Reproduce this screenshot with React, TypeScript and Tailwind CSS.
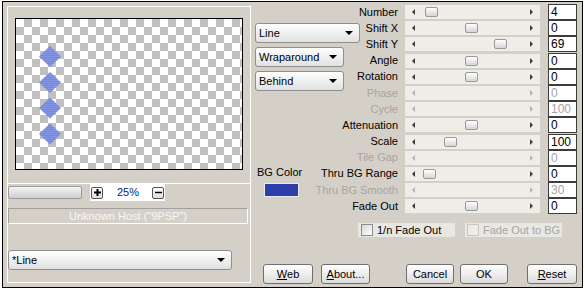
import React from "react";

type Row = { label: string; value: string; thumb?: number; disabled?: boolean };

const rows: Row[] = [
  { label: "Number", value: "4", thumb: 20 },
  { label: "Shift X", value: "0", thumb: 60 },
  { label: "Shift Y", value: "69", thumb: 89 },
  { label: "Angle", value: "0", thumb: 60 },
  { label: "Rotation", value: "0", thumb: 60 },
  { label: "Phase", value: "0", disabled: true },
  { label: "Cycle", value: "100", disabled: true },
  { label: "Attenuation", value: "0", thumb: 60 },
  { label: "Scale", value: "100", thumb: 39 },
  { label: "Tile Gap", value: "0", disabled: true },
  { label: "Thru BG Range", value: "0", thumb: 18 },
  { label: "Thru BG Smooth", value: "30", disabled: true },
  { label: "Fade Out", value: "0", thumb: 60 },
];

function Combo({ label, className }: { label: string; className: string }) {
  return (
    <div
      className={`flex items-center justify-between h-[20px] rounded-[3px] border border-[#8e8e8e] bg-linear-to-b from-white to-[#e1e1e1] pl-[3px] pr-[6px] ${className}`}
    >
      <span>{label}</span>
      <span className="border-x-[4px] border-x-transparent border-t-[4px] border-t-black" />
    </div>
  );
}

function Button({ children, className }: { children: React.ReactNode; className: string }) {
  return (
    <div
      className={`h-[20px] rounded-[3px] border border-[#707070] bg-linear-to-b from-white to-[#dcdcdc] flex items-center justify-center ${className}`}
    >
      {children}
    </div>
  );
}

function SliderRow({ row }: { row: Row }) {
  const arrow = row.disabled ? "#b4b4b4" : "#3c3c3c";
  return (
    <div className="flex items-center h-[16.2px]">
      <div
        className={`w-[78px] flex justify-end whitespace-nowrap ${row.disabled ? "text-[#a5a5a5]" : "text-black"}`}
      >
        {row.label}
      </div>
      <div className="ml-[7px] w-[135px] h-[14px] relative bg-[#eeede8] flex items-center">
        <svg width="4" height="6" className="ml-[7px]">
          <path d="M3 0 L0 3 L3 6 Z" fill={arrow} />
        </svg>
        <svg width="4" height="6" className="ml-auto mr-[6px]">
          <path d="M0 0 L3 3 L0 6 Z" fill={arrow} />
        </svg>
        {row.thumb !== undefined && (
          <div
            className="absolute top-[2px] w-[13px] h-[10px] rounded-[2px] border border-[#9a9a9a] bg-linear-to-b from-white to-[#d6d6d6]"
            style={{ left: row.thumb }}
          />
        )}
      </div>
      <div
        className={`ml-[8px] w-[29px] h-[16px] bg-white border border-[#3c3c3c] pl-[2px] text-[12px] flex items-center ${row.disabled ? "text-[#a5a5a5]" : "text-black"}`}
      >
        {row.value}
      </div>
    </div>
  );
}

function Preview() {
  const ys = [37.5, 63.5, 89, 115];
  return (
    <svg width="226" height="150" className="block">
      <defs>
        <pattern id="stripes" width="4" height="2" patternUnits="userSpaceOnUse">
          <rect width="4" height="1" fill="#7688de" />
          <rect y="1" width="4" height="1" fill="#8395e3" />
        </pattern>
      </defs>
      {ys.map((y) => (
        <path
          key={y}
          d={`M34 ${y - 10.5} L45 ${y} L34 ${y + 10.5} L23 ${y} Z`}
          fill="url(#stripes)"
        />
      ))}
    </svg>
  );
}

export default function App() {
  return (
    <div className="w-[585px] h-[289px] bg-white pt-[1px] pl-[2px] font-['Liberation_Sans',Arial,sans-serif] text-[11px] leading-none text-black">
      <div className="w-[581px] h-[287px] border border-black bg-[#d4d0c8] flex">
        {/* Left: preview panel */}
        <div className="ml-[4px] mt-[4px] w-[244px] h-[277px] border border-white flex flex-col shrink-0">
          <div className="ml-[7px] mt-[11px] w-[228px] h-[152px] border border-black bg-[image:conic-gradient(#c0c0c0_25%,#fff_0_50%,#c0c0c0_0_75%,#fff_0)] bg-[length:16px_16px]">
            <Preview />
          </div>

          <div className="mt-[13px] h-[18px] border-t border-white flex items-center">
            <div className="w-[74px] h-[13px] rounded-[2px] border border-[#9a9a9a] bg-linear-to-b from-[#f4f4f4] to-[#cfcfcf]" />
            <div className="ml-[8px] w-[75px] h-full bg-white flex items-center">
              <div className="ml-[1px] w-[12px] h-[12px] rounded-[2px] border border-[#555] bg-linear-to-b from-white to-[#dcdcdc] flex items-center justify-center">
                <svg width="7" height="7">
                  <path d="M3.5 0 V7 M0 3.5 H7" stroke="#000" strokeWidth="2" />
                </svg>
              </div>
              <span className="ml-[14px] text-[#0a1a78]">25%</span>
              <div className="ml-[13px] w-[12px] h-[12px] rounded-[2px] border border-[#555] bg-linear-to-b from-white to-[#dcdcdc] flex items-center justify-center">
                <svg width="7" height="7">
                  <path d="M0 3.5 H7" stroke="#000" strokeWidth="1.5" />
                </svg>
              </div>
            </div>
          </div>

          <div className="mt-[7px] w-[240px] h-[16px] border border-t-[#a0a0a0] border-l-[#a0a0a0] border-b-white border-r-white flex items-center justify-center text-[#f6f6f6]">
            Unknown Host ("9PSP")
          </div>

          <Combo label="*Line" className="mt-[26px] w-[224px]" />
        </div>

        {/* Right: settings */}
        <div className="ml-[4px] pt-[2px] flex-1 flex flex-col">
          <div className="flex">
            <div className="w-[65px] shrink-0 flex flex-col pt-[19px]">
              <Combo label="Line" className="w-[105px]" />
              <Combo label="Wraparound" className="mt-[4px] w-[89px]" />
              <Combo label="Behind" className="mt-[4px] w-[89px]" />
              <div className="mt-[74px] ml-[2px] h-[14px] flex items-center whitespace-nowrap">BG Color</div>
              <div className="mt-[4px] ml-[9px] w-[35px] h-[14px] bg-[#2b3ea9] border border-[#ececec]" />
            </div>
            <div className="flex flex-col">
              {rows.map((r) => (
                <SliderRow key={r.label} row={r} />
              ))}
            </div>
          </div>

          <div className="mt-[9px] ml-[103px] flex h-[14px]">
            <div className="w-[97px] h-full bg-[#e9e7e2] flex items-center">
              <div className="ml-[3px] w-[12px] h-[12px] border border-[#8c8c8c] bg-linear-to-br from-[#d8d8d4] to-white" />
              <span className="ml-[4px]">1/n Fade Out</span>
            </div>
            <div className="ml-[10px] w-[97px] h-full bg-[#e9e7e2] flex items-center">
              <div className="ml-[2px] w-[12px] h-[12px] border border-[#c6c6c2] bg-[#ecebe7]" />
              <span className="ml-[4px] text-[#a5a5a5]">Fade Out to BG</span>
            </div>
          </div>

          <div className="mt-[27px] flex">
            <Button className="ml-[8px] w-[50px]">
              <u>W</u>eb
            </Button>
            <Button className="ml-[8px] w-[49px]">
              <u>A</u>bout...
            </Button>
            <Button className="ml-[36px] w-[48px]">Cancel</Button>
            <Button className="ml-[6px] w-[48px]">OK</Button>
            <Button className="ml-[19px] w-[50px]">
              <u>R</u>eset
            </Button>
          </div>
        </div>
      </div>
    </div>
  );
}
